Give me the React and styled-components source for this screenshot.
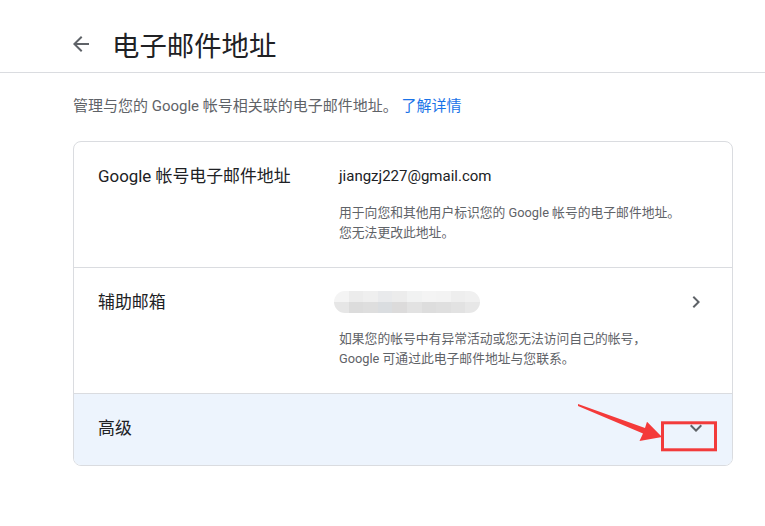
import styled, { createGlobalStyle } from "styled-components";

const GlobalStyle = createGlobalStyle`
  body {
    margin: 0;
    background: #ffffff;
    font-family: Roboto, "Noto Sans CJK SC", sans-serif;
    color: #202124;
  }
`;

const blurTop = ['#f4f4f4', '#ececec', '#efefef', '#e9eaec', '#ececec', '#f1f2f2', '#f4f4f4', '#f3f3f3', '#eeeeee', '#f0f0f0'];
const blurBottom = ['#e6e6e6', '#dcdcdc', '#dedede', '#dadde0', '#dcdbdb', '#e2e2e2', '#dddddd', '#dfdfdf', '#e2e2e2', '#e7e7e7'];

export default function App(){
    return(
        <>
        <GlobalStyle />
        <Page>
            <Header>
                <BackButton aria-label="返回">
                    <svg width="24" height="24" viewBox="0 0 24 24">
                        <path fill="#5f6368" d="M20 11H7.83l5.59-5.59L12 4l-8 8 8 8 1.41-1.41L7.83 13H20v-2z" />
                    </svg>
                </BackButton>
                <Title>电子邮件地址</Title>
            </Header>
            <Main>
                <Intro>
                    管理与您的 Google 帐号相关联的电子邮件地址。 <Link>了解详情</Link>
                </Intro>
                <Card>
                    <Row>
                        <Label>Google 帐号电子邮件地址</Label>
                        <Content>
                            <Email>jiangzj227@gmail.com</Email>
                            <Hint>
                                用于向您和其他用户标识您的 Google 帐号的电子邮件地址。<br />
                                您无法更改此地址。
                            </Hint>
                        </Content>
                        <IconCell />
                    </Row>
                    <Row>
                        <Label>辅助邮箱</Label>
                        <Content>
                            <EmailLine>
                                <Blurred>
                                    <BlurRow>{blurTop.map((c, i) => <BlurCell key={i} $c={c} />)}</BlurRow>
                                    <BlurRow>{blurBottom.map((c, i) => <BlurCell key={i} $c={c} />)}</BlurRow>
                                </Blurred>
                            </EmailLine>
                            <Hint>
                                如果您的帐号中有异常活动或您无法访问自己的帐号，<br />
                                Google 可通过此电子邮件地址与您联系。
                            </Hint>
                        </Content>
                        <IconCell>
                            <svg width="24" height="24" viewBox="0 0 24 24">
                                <path fill="#5f6368" d="M10 6L8.59 7.41 13.17 12l-4.58 4.59L10 18l6-6z" />
                            </svg>
                        </IconCell>
                    </Row>
                    <Advanced>
                        <Label>高级</Label>
                        <Content />
                        <IconCell>
                            <svg width="24" height="24" viewBox="0 0 24 24">
                                <path fill="#5f6368" d="M16.59 8.59L12 13.17 7.41 8.59 6 10l6 6 6-6z" />
                            </svg>
                        </IconCell>
                    </Advanced>
                </Card>
            </Main>
            <Annotation width="765" height="526" viewBox="0 0 765 526">
                <polygon fill="#f43a3a" points="578,404 645,428 647,421.7 662,437 639.5,441 643,433.5 578,406" />
                <rect x="662.5" y="422.8" width="53" height="27" fill="none" stroke="#f23b3b" strokeWidth="3" />
            </Annotation>
        </Page>
        </>
    );
}

const Page = styled.div`
    position: relative;
    width: 765px;
    height: 526px;
    overflow: hidden;
`;

const Header = styled.header`
    height: 73px;
    box-sizing: border-box;
    padding: 30px 0 0 69px;
    border-bottom: 1px solid #dadce0;
    display: flex;
    align-items: flex-start;
    gap: 19px;
`;

const BackButton = styled.div`
    width: 24px;
    height: 28px;
    display: flex;
    align-items: center;
    justify-content: center;
`;

const Title = styled.h1`
    margin: 0;
    font-family: "Noto Sans CJK SC", sans-serif;
    font-weight: 400;
    font-size: 27.4px;
    line-height: 28px;
    color: #202124;
`;

const Main = styled.main`
    padding: 23px 0 0 73px;
`;

const Intro = styled.p`
    margin: 0 0 25px;
    font-size: 15px;
    line-height: 20px;
    color: #5f6368;
`;

const Link = styled.a`
    color: #1a73e8;
    cursor: pointer;
`;

const Card = styled.section`
    width: 660px;
    box-sizing: border-box;
    border: 1px solid #dadce0;
    border-radius: 8px;
    overflow: hidden;
`;

const Row = styled.div`
    display: grid;
    grid-template-columns: 241px 1fr 24px;
    padding: 22px 24px 24px;
    border-bottom: 1px solid #dadce0;
`;

const Advanced = styled(Row)`
    height: 71px;
    box-sizing: border-box;
    padding: 0 24px 3px;
    align-items: center;
    border-bottom: none;
    background: #edf4fd;
`;

const Label = styled.div`
    font-size: 16.9px;
    line-height: 24px;
    color: #202124;
`;

const Content = styled.div`
    display: flex;
    flex-direction: column;
    gap: 15px;
`;

const Email = styled.div`
    font-size: 15px;
    line-height: 24px;
    color: #202124;
`;

const EmailLine = styled.div`
    height: 24px;
    display: flex;
    align-items: center;
`;

const Blurred = styled.div`
    width: 146px;
    height: 22px;
    margin-left: -5px;
    border-radius: 11px;
    overflow: hidden;
    display: flex;
    flex-direction: column;
    filter: blur(0.4px);
`;

const BlurRow = styled.div`
    flex: 1;
    display: flex;
`;

const BlurCell = styled.div`
    flex: 1;
    background: ${props => props.$c};
`;

const Hint = styled.div`
    font-size: 12.8px;
    line-height: 20px;
    color: #5f6368;
`;

const IconCell = styled.div`
    display: flex;
    align-items: center;
    justify-content: center;
    height: 24px;
`;

const Annotation = styled.svg`
    position: absolute;
    top: 0;
    left: 0;
    pointer-events: none;
`;
